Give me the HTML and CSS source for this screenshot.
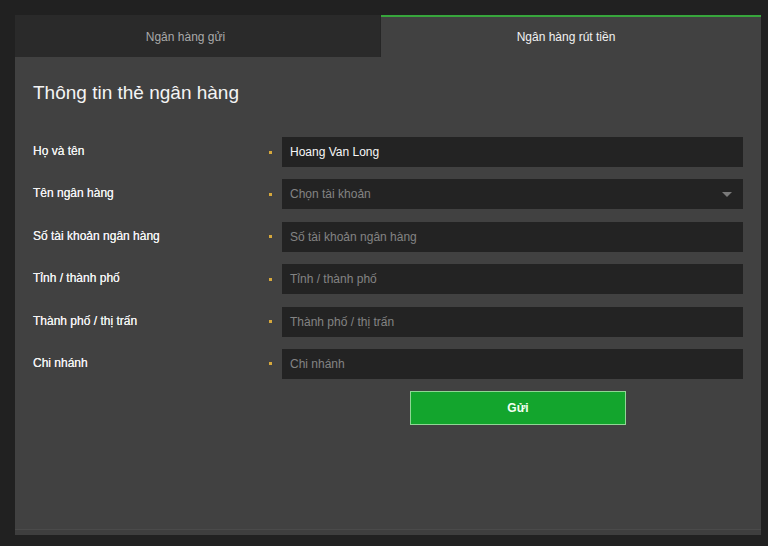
FILE: index.html
```html
<!DOCTYPE html>
<html lang="vi">
<head>
<meta charset="utf-8">
<title>Thông tin thẻ ngân hàng</title>
<link rel="stylesheet" href="styles.css">
</head>
<body>
<div class="panel">
  <div class="tabs">
    <div class="tab">Ngân hàng gửi</div>
    <div class="tab active">Ngân hàng rút tiền</div>
  </div>
  <div class="content">
    <h2 class="title">Thông tin thẻ ngân hàng</h2>
    <form class="form">
      <label class="label">Họ và tên</label>
      <span class="dot"></span>
      <div class="field value">Hoang Van Long</div>

      <label class="label">Tên ngân hàng</label>
      <span class="dot"></span>
      <div class="field placeholder select">Chọn tài khoản<span class="caret"></span></div>

      <label class="label">Số tài khoản ngân hàng</label>
      <span class="dot"></span>
      <div class="field placeholder">Số tài khoản ngân hàng</div>

      <label class="label">Tỉnh / thành phố</label>
      <span class="dot"></span>
      <div class="field placeholder">Tỉnh / thành phố</div>

      <label class="label">Thành phố / thị trấn</label>
      <span class="dot"></span>
      <div class="field placeholder">Thành phố / thị trấn</div>

      <label class="label">Chi nhánh</label>
      <span class="dot"></span>
      <div class="field placeholder">Chi nhánh</div>

      <div class="actions">
        <button type="button" class="submit">Gửi</button>
      </div>
    </form>
  </div>
  <div class="footer-line"></div>
</div>
</body>
</html>
```

FILE: styles.css
```css
* { box-sizing: border-box; }
html, body { margin: 0; padding: 0; }
body {
  background: #212121;
  font-family: "Liberation Sans", Arial, sans-serif;
  width: 768px;
  height: 546px;
  padding: 15px 7px 11px 15px;
  overflow: hidden;
}
.panel {
  width: 746px;
  height: 520px;
  background: #414141;
  display: flex;
  flex-direction: column;
}
.tabs {
  display: flex;
  height: 42px;
}
.tab {
  flex: 0 0 366px;
  background: #2a2a2a;
  color: #a9a9a9;
  font-size: 12px;
  display: flex;
  align-items: center;
  justify-content: center;
  border-right: 1px solid #262626;
  padding-top: 2px;
  padding-right: 24px;
}
.tab.active {
  flex: 1 1 auto;
  background: #414141;
  color: #f2f2f2;
  border-top: 2px solid #37a63c;
  border-right: none;
  align-items: flex-start;
  padding-top: 13px;
  padding-right: 10px;
}
.content {
  flex: 1 1 auto;
  padding: 24px 18px 0 18px;
}
.title {
  margin: 0 0 32px 0;
  font-size: 19px;
  line-height: 24px;
  font-weight: normal;
  color: #f4f4f4;
}
.form {
  display: grid;
  grid-template-columns: 226px 3px 1fr;
  column-gap: 10px;
  row-gap: 12.4px;
  align-items: center;
}
.label {
  color: #f2f2f2;
  font-size: 12px;
  padding-bottom: 2px;
  text-shadow: 0 0 0.4px #f2f2f2;
}
.dot {
  width: 3px;
  height: 3px;
  background: #d6a83c;
}
.field {
  height: 30px;
  background: #232323;
  font-size: 12px;
  display: flex;
  align-items: center;
  padding: 0 8px;
  position: relative;
}
.value { color: #f7f7f7; }
.placeholder { color: #838383; }
.caret {
  position: absolute;
  right: 11px;
  top: 13px;
  width: 0;
  height: 0;
  border-left: 5px solid transparent;
  border-right: 5px solid transparent;
  border-top: 5px solid #7a7a7a;
}
.actions {
  grid-column: 3;
  padding-left: 128px;
}
.submit {
  width: 216px;
  height: 34px;
  background: #13a52d;
  border: 1px solid #8fd694;
  color: #f3fff3;
  font-family: "Liberation Sans", Arial, sans-serif;
  font-size: 12px;
  font-weight: bold;
  padding: 0;
}
.footer-line {
  height: 6px;
  border-top: 1px solid #4a4a4a;
  background: #3e3e3e;
}
```
